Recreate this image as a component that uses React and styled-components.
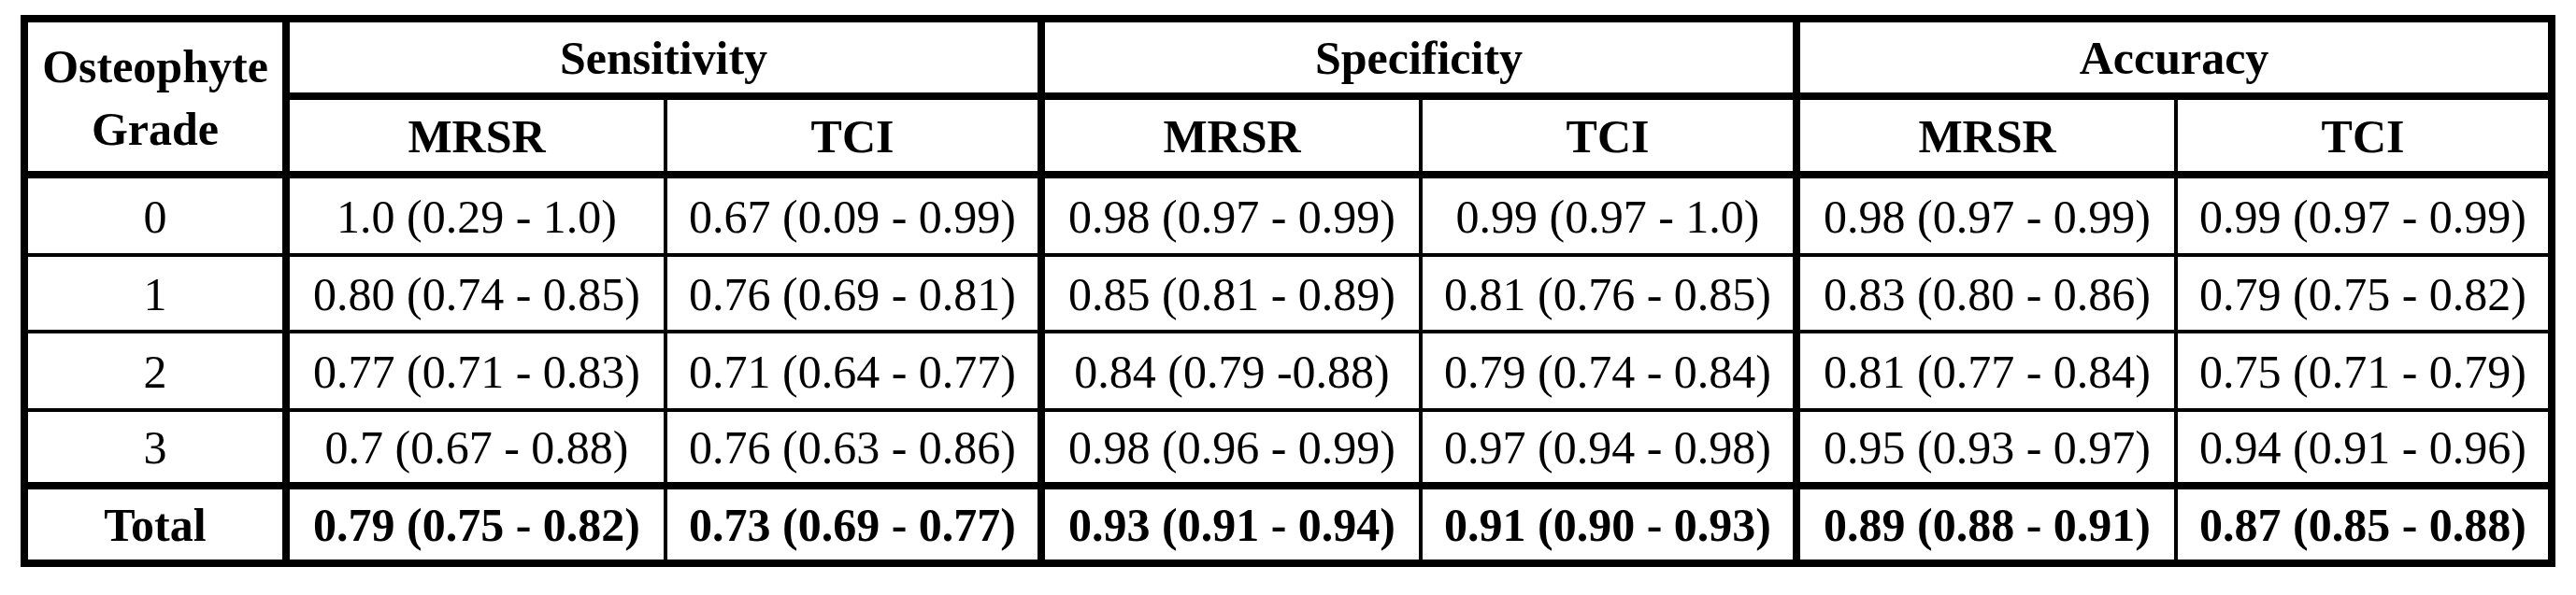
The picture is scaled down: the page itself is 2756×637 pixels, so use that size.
import React from "react";
import styled, { createGlobalStyle } from "styled-components";

const GlobalStyle = createGlobalStyle`
  body {
    margin: 0;
    background: #fff;
  }
`;

const groups = ["Sensitivity", "Specificity", "Accuracy"];

const rows = [
  {
    grade: "0",
    values: [
      "1.0 (0.29 - 1.0)",
      "0.67 (0.09 - 0.99)",
      "0.98 (0.97 - 0.99)",
      "0.99 (0.97 - 1.0)",
      "0.98 (0.97 - 0.99)",
      "0.99 (0.97 - 0.99)",
    ],
  },
  {
    grade: "1",
    values: [
      "0.80 (0.74 - 0.85)",
      "0.76 (0.69 - 0.81)",
      "0.85 (0.81 - 0.89)",
      "0.81 (0.76 - 0.85)",
      "0.83 (0.80 - 0.86)",
      "0.79 (0.75 - 0.82)",
    ],
  },
  {
    grade: "2",
    values: [
      "0.77 (0.71 - 0.83)",
      "0.71 (0.64 - 0.77)",
      "0.84 (0.79 -0.88)",
      "0.79 (0.74 - 0.84)",
      "0.81 (0.77 - 0.84)",
      "0.75 (0.71 - 0.79)",
    ],
  },
  {
    grade: "3",
    values: [
      "0.7 (0.67 - 0.88)",
      "0.76 (0.63 - 0.86)",
      "0.98 (0.96 - 0.99)",
      "0.97 (0.94 - 0.98)",
      "0.95 (0.93 - 0.97)",
      "0.94 (0.91 - 0.96)",
    ],
  },
  {
    grade: "Total",
    bold: true,
    values: [
      "0.79 (0.75 - 0.82)",
      "0.73 (0.69 - 0.77)",
      "0.93 (0.91 - 0.94)",
      "0.91 (0.90 - 0.93)",
      "0.89 (0.88 - 0.91)",
      "0.87 (0.85 - 0.88)",
    ],
  },
];

function App() {
  return (
    <Page>
      <GlobalStyle />
      <Table>
        <Cell $r={8} $b={8} $rowSpan={2} $bold $lh="67px">
          Osteophyte
          <br />
          Grade
        </Cell>
        {groups.map((g) => (
          <Cell key={g} $r={8} $b={8} $colSpan={2} $bold>
            {g}
          </Cell>
        ))}
        {groups.map((g) => (
          <React.Fragment key={g}>
            <Cell $r={4} $b={8} $bold>
              MRSR
            </Cell>
            <Cell $r={8} $b={8} $bold>
              TCI
            </Cell>
          </React.Fragment>
        ))}
        {rows.map((row, i) => {
          // the last two rows get the heavy rule under them
          const b = i >= rows.length - 2 ? 8 : 4;
          return (
            <React.Fragment key={row.grade}>
              <Cell $r={8} $b={b} $bold={row.bold}>
                {row.grade}
              </Cell>
              {row.values.map((v, j) => (
                <Cell key={j} $r={j % 2 === 0 ? 4 : 8} $b={b} $bold={row.bold}>
                  {v}
                </Cell>
              ))}
            </React.Fragment>
          );
        })}
      </Table>
    </Page>
  );
}

const Page = styled.div`
  padding: 16px 0 0 22px;
  font-family: "Liberation Serif", "Times New Roman", serif;
  color: #000;
`;

const Table = styled.div`
  display: grid;
  grid-template-columns: 280px repeat(6, 404px);
  grid-template-rows: 83px 84px 84px 82px 84px 83px 83px;
  width: max-content;
  border-top: 8px solid #000;
  border-left: 8px solid #000;
`;

const Cell = styled.div`
  box-sizing: border-box;
  display: flex;
  align-items: center;
  justify-content: center;
  padding-top: 3px;
  text-align: center;
  white-space: nowrap;
  font-size: 50px;
  line-height: ${(p) => p.$lh || "1.15"};
  font-weight: ${(p) => (p.$bold ? 700 : 400)};
  border-right: ${(p) => p.$r}px solid #000;
  border-bottom: ${(p) => p.$b}px solid #000;
  grid-row: ${(p) => (p.$rowSpan ? `span ${p.$rowSpan}` : "auto")};
  grid-column: ${(p) => (p.$colSpan ? `span ${p.$colSpan}` : "auto")};
`;

export default App;
